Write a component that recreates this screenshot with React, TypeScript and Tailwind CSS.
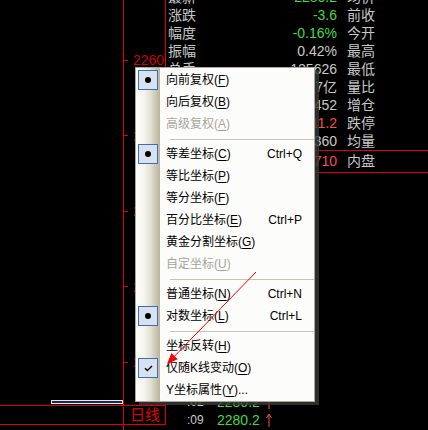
import React from 'react';

type Row = { l: string; v: string; c: string; r: string };

const rows: Row[] = [
  { l: '最新', v: '2280.2', c: 'text-[#3fdc3f]', r: '均价' },
  { l: '涨跌', v: '-3.6', c: 'text-[#3fdc3f]', r: '前收' },
  { l: '幅度', v: '-0.16%', c: 'text-[#3fdc3f]', r: '今开' },
  { l: '振幅', v: '0.42%', c: 'text-[#c8c8c8]', r: '最高' },
  { l: '总手', v: '125626', c: 'text-[#c8c8c8]', r: '最低' },
  { l: '金额', v: '28.7亿', c: 'text-[#c8c8c8]', r: '量比' },
  { l: '持仓', v: '113452', c: 'text-[#c8c8c8]', r: '增仓' },
  { l: '涨停', v: '2511.2', c: 'text-[#ff4a4a]', r: '跌停' },
  { l: '外盘', v: '62360', c: 'text-[#c8c8c8]', r: '均量' },
];

type MenuEntry =
  | { sep: true }
  | {
      sep?: false;
      text: string;
      key: string;
      tail?: string;
      shortcut?: string;
      disabled?: boolean;
      icon?: 'dot' | 'check';
    };

const menu: MenuEntry[] = [
  { text: '向前复权', key: 'F', icon: 'dot' },
  { text: '向后复权', key: 'B' },
  { text: '高级复权', key: 'A', disabled: true },
  { sep: true },
  { text: '等差坐标', key: 'C', shortcut: 'Ctrl+Q', icon: 'dot' },
  { text: '等比坐标', key: 'P' },
  { text: '等分坐标', key: 'F' },
  { text: '百分比坐标', key: 'E', shortcut: 'Ctrl+P' },
  { text: '黄金分割坐标', key: 'G' },
  { text: '自定坐标', key: 'U', disabled: true },
  { sep: true },
  { text: '普通坐标', key: 'N', shortcut: 'Ctrl+N' },
  { text: '对数坐标', key: 'L', shortcut: 'Ctrl+L', icon: 'dot' },
  { sep: true },
  { text: '坐标反转', key: 'H' },
  { text: '仅随K线变动', key: 'O', icon: 'check' },
  { text: 'Y坐标属性', key: 'Y', tail: '...' },
];

function UpArrow() {
  return (
    <svg width="6" height="14" viewBox="0 0 6 14" className="block">
      <path d="M3 1 L3 14" stroke="#ff4a4a" strokeWidth="1" fill="none" />
      <path d="M0.5 5 L3 1 L5.5 5" stroke="#ff4a4a" strokeWidth="1" fill="none" />
    </svg>
  );
}

function Menu() {
  return (
    <div className="absolute left-[135px] top-[67px] z-10 flex h-[335px] w-[180px] flex-col border border-[#a9a79b] bg-[linear-gradient(to_right,#fdfdfb_0px,#f5f4ee_8px,#e2dfd2_15px,#c9c5b1_20px,#bab59f_24px,#fcfcfa_24px)] pt-px text-[12px] text-black shadow-[4px_3px_0_rgba(58,58,58,0.8)]">
      {menu.map((m, i) =>
        m.sep ? (
          <div key={i} className="flex h-[8px] items-center">
            <div className="ml-[34px] h-px flex-1 bg-[#c5c2b2]" />
          </div>
        ) : (
          <div key={i} className="flex h-[22px] items-center">
            <div className="flex w-[24px] shrink-0 items-center pl-[2px]">
              {m.icon && (
                <div className="flex h-[20px] w-[20px] items-center justify-center border border-[#3a6cc0] bg-[#d9e1ef]">
                  {m.icon === 'dot' ? (
                    <div className="h-[6px] w-[6px] rounded-full bg-black" />
                  ) : (
                    <svg width="9" height="7" viewBox="0 0 9 7">
                      <path d="M1 3.2 L3.4 5.6 L8 1" stroke="#000" strokeWidth="1.4" fill="none" />
                    </svg>
                  )}
                </div>
              )}
            </div>
            <div
              className={`flex flex-1 items-center justify-between pl-[6px] pr-[12px] ${
                m.disabled ? 'text-[#a8a69c]' : 'text-black'
              }`}
            >
              <span className="whitespace-nowrap">
                {m.text}(<span className="underline underline-offset-2">{m.key}</span>){m.tail ?? ''}
              </span>
              {m.shortcut && <span className="whitespace-nowrap">{m.shortcut}</span>}
            </div>
          </div>
        )
      )}
    </div>
  );
}

export default function App() {
  const ticks = ['2260', '2250', '2240', '2230', '2220'];
  return (
    <div className="relative flex h-[430px] w-[428px] overflow-hidden bg-black font-['Liberation_Sans','Noto_Sans_CJK_SC',sans-serif]">
      {/* left block: chart + axis */}
      <div className="flex w-[166px] shrink-0 flex-col">
        <div className="flex h-[405px]">
          <div className="flex w-[123px] flex-col justify-end pb-px">
            <div className="ml-[51px] h-[4px] w-[72px] border border-[#e6e6e6] bg-[#1b2a5e]" />
          </div>
          <div className="flex w-[43px] flex-col gap-[61.5px] border-x border-[#e00000] pt-[53px]">
            {ticks.map((t) => (
              <div key={t} className="flex h-[14px] items-center">
                <div className="h-px w-[4px] bg-[#e00000]" />
                <span className="ml-[5px] text-[14px] leading-none text-[#c80000]">{t}</span>
              </div>
            ))}
          </div>
        </div>
        <div className="h-px bg-[#e00000]" />
        <div className="flex h-[18px]">
          <div className="w-[123px]" />
          <div className="flex w-[43px] items-center border-x border-[#e00000] pl-[6px] text-[15px] text-[#e00000]">
            日线
          </div>
        </div>
        <div className="h-px bg-[#e00000]" />
        <div className="flex flex-1">
          <div className="w-[123px]" />
          <div className="border-l border-[#e00000]" />
        </div>
      </div>

      {/* right data panel */}
      <div className="flex flex-1 flex-col">
        <div className="-mt-[12px] flex flex-col">
          {rows.map((r, i) => (
            <div key={i} className="flex h-[18px] items-center text-[14px]">
              <div className="flex w-[171px] items-center justify-between pl-[2px]">
                <span className="text-[#c8c8c8]">{r.l}</span>
                <span className={r.c}>{r.v}</span>
              </div>
              <span className="pl-[10px] text-[#c8c8c8]">{r.r}</span>
            </div>
          ))}
          <div className="flex h-[23px] items-center border-y border-[#e00000] text-[14px]">
            <div className="flex w-[171px] items-center justify-between pl-[2px]">
              <span className="text-[#c8c8c8]">委比</span>
              <span className="text-[#ff4a4a]">63710</span>
            </div>
            <span className="pl-[10px] text-[#c8c8c8]">内盘</span>
          </div>
        </div>
        <div className="flex-1" />
        <div className="flex flex-col pb-[1px]">
          {[':02', ':09'].map((t) => (
            <div key={t} className="flex h-[18px] items-center">
              <span className="w-[51px] pl-[21px] text-[12px] text-[#c8c8c8]">{t}</span>
              <span className="w-[49px] text-[14px] text-[#3fdc3f]">2280.2</span>
              <UpArrow />
            </div>
          ))}
        </div>
      </div>

      <Menu />

      {/* annotation arrow */}
      <svg className="pointer-events-none absolute left-0 top-0 z-20" width="428" height="430">
        <line x1="256" y1="272" x2="174.6" y2="356.1" stroke="#ff0000" strokeWidth="1" />
        <polygon points="167,364 177.8,359.2 171.4,353" fill="#ff0000" />
      </svg>
    </div>
  );
}
